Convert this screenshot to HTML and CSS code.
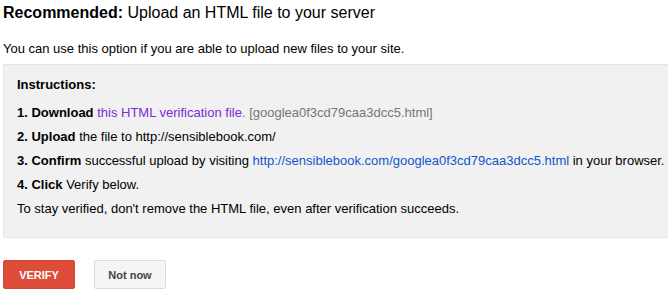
FILE: index.html
```html
<!DOCTYPE html>
<html lang="en">
<head>
    <meta charset="UTF-8">
    <title>Upload an HTML file to your server</title>
    <link rel="stylesheet" href="styles.css">
</head>
<body>
    <div class="page">
        <h1><b>Recommended:</b> Upload an HTML file to your server</h1>
        <p class="intro">You can use this option if you are able to upload new files to your site.</p>

        <div class="instructions">
            <div class="title">Instructions:</div>
            <div class="step"><b>1. Download</b> <a class="visited" href="#">this HTML verification file</a><span class="muted">. [googlea0f3cd79caa3dcc5.html]</span></div>
            <div class="step"><b>2. Upload</b> the file to http://sensiblebook.com/</div>
            <div class="step"><b>3. Confirm</b> successful upload by visiting <a href="#">http://sensiblebook.com/googlea0f3cd79caa3dcc5.html</a> in your browser.</div>
            <div class="step"><b>4. Click</b> Verify below.</div>
            <div class="step">To stay verified, don't remove the HTML file, even after verification succeeds.</div>
        </div>

        <div class="actions">
            <button class="btn btn-primary">Verify</button>
            <button class="btn">Not now</button>
        </div>
    </div>
</body>
</html>
```

FILE: styles.css
```css
body {
    margin: 0;
    font-family: 'Liberation Sans', Arial, sans-serif;
    font-size: 13px;
    color: #222;
    background: #fff;
}
.page {
    padding: 0 0 0 3px;
}
h1 {
    margin: 3px 0 0;
    font-size: 16px;
    line-height: 20px;
    font-weight: normal;
    color: #000;
}
.intro {
    margin: 18px 0 0;
    line-height: 16px;
    color: #000;
}
/* the box runs off the right side in the original, so no right border */
.instructions {
    margin-top: 7px;
    background: #f1f1f1;
    border: 1px solid #e5e5e5;
    border-right: none;
    padding: 12px 0 16px 13px;
    color: #000;
    white-space: nowrap;
    overflow: hidden;
}
.title {
    font-weight: bold;
    line-height: 16px;
    margin-bottom: 8px;
}
.step {
    line-height: 24px;
}
a {
    color: #1155cc;
    text-decoration: none;
}
a.visited {
    color: #7b2bd6;
}
.muted {
    color: #777;
}
.actions {
    display: flex;
    gap: 19px;
    margin-top: 22px;
}
.btn {
    min-width: 72px;
    height: 29px;
    padding: 0 8px;
    border: 1px solid #dcdcdc;
    border-radius: 2px;
    background: #f5f5f5;
    color: #444;
    font-family: inherit;
    font-size: 11px;
    font-weight: bold;
}
.btn-primary {
    background: #dd4b39;
    border-color: #d14836;
    color: #fff;
    text-transform: uppercase;
}
```
